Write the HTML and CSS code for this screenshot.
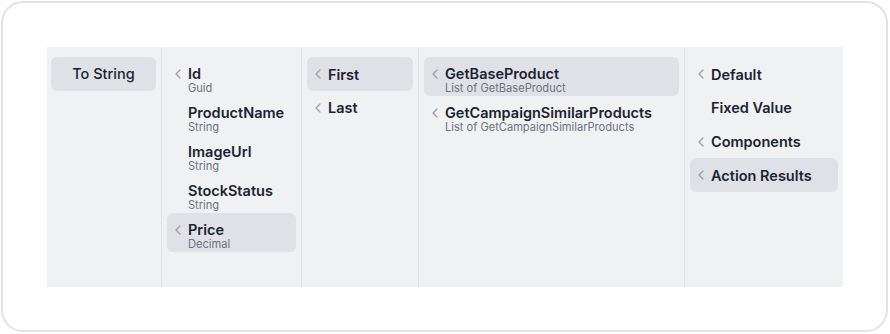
FILE: index.html
```html
<!DOCTYPE html>
<html>
<head>
<meta charset="utf-8">
<link rel="stylesheet" href="styles.css">
</head>
<body>
<div class="card">
  <div class="panel">
    <div class="col col-1">
      <div class="btn">To String</div>
    </div>
    <div class="col col-2">
      <div class="item two"><span class="chev"><svg viewBox="0 0 6 10"><polyline points="5,1 1,5 5,9"/></svg></span><div class="txt"><div class="title">Id</div><div class="sub">Guid</div></div></div>
      <div class="item two"><span class="chev"></span><div class="txt"><div class="title">ProductName</div><div class="sub">String</div></div></div>
      <div class="item two"><span class="chev"></span><div class="txt"><div class="title">ImageUrl</div><div class="sub">String</div></div></div>
      <div class="item two"><span class="chev"></span><div class="txt"><div class="title">StockStatus</div><div class="sub">String</div></div></div>
      <div class="item two active"><span class="chev"><svg viewBox="0 0 6 10"><polyline points="5,1 1,5 5,9"/></svg></span><div class="txt"><div class="title">Price</div><div class="sub">Decimal</div></div></div>
    </div>
    <div class="col col-3">
      <div class="item one active"><span class="chev"><svg viewBox="0 0 6 10"><polyline points="5,1 1,5 5,9"/></svg></span><div class="txt"><div class="title">First</div></div></div>
      <div class="item one"><span class="chev"><svg viewBox="0 0 6 10"><polyline points="5,1 1,5 5,9"/></svg></span><div class="txt"><div class="title">Last</div></div></div>
    </div>
    <div class="col col-4">
      <div class="item two active"><span class="chev"><svg viewBox="0 0 6 10"><polyline points="5,1 1,5 5,9"/></svg></span><div class="txt"><div class="title">GetBaseProduct</div><div class="sub">List of GetBaseProduct</div></div></div>
      <div class="item two"><span class="chev"><svg viewBox="0 0 6 10"><polyline points="5,1 1,5 5,9"/></svg></span><div class="txt"><div class="title">GetCampaignSimilarProducts</div><div class="sub">List of GetCampaignSimilarProducts</div></div></div>
    </div>
    <div class="col col-5">
      <div class="item one"><span class="chev"><svg viewBox="0 0 6 10"><polyline points="5,1 1,5 5,9"/></svg></span><div class="txt"><div class="title">Default</div></div></div>
      <div class="item one"><span class="chev"></span><div class="txt"><div class="title">Fixed Value</div></div></div>
      <div class="item one"><span class="chev"><svg viewBox="0 0 6 10"><polyline points="5,1 1,5 5,9"/></svg></span><div class="txt"><div class="title">Components</div></div></div>
      <div class="item one active"><span class="chev"><svg viewBox="0 0 6 10"><polyline points="5,1 1,5 5,9"/></svg></span><div class="txt"><div class="title">Action Results</div></div></div>
    </div>
  </div>
</div>
</body>
</html>
```

FILE: styles.css
```css
* { box-sizing: border-box; }
html, body { margin: 0; padding: 0; background: #ffffff; }
body {
  font-family: Inter, "Noto Sans", "Liberation Sans", sans-serif;
  color: #1b2333;
}
.card {
  margin: 1px 0 0 1px;
  width: 887px;
  height: 331px;
  border: 2px solid #e1e3e7;
  border-radius: 22px;
  background: #fff;
  padding: 44px 0 0 44px;
}
.panel {
  width: 796px;
  height: 240px;
  background: #f0f1f3;
  display: flex;
}
.col {
  padding: 10px 5px 5px 5px;
  border-right: 1px solid #e0e2e6;
  display: flex;
  flex-direction: column;
}
.col-1 { width: 115px; }
.col-2 { width: 140px; }
.col-3 { width: 117px; }
.col-4 { width: 266px; }
.col-5 { width: 158px; border-right: none; }

.btn {
  height: 33.5px;
  margin-left: -1px;
  border-radius: 6px;
  background: #dfe1e6;
  display: flex;
  align-items: center;
  justify-content: center;
  font-size: 14.5px;
  font-weight: 500;
  color: #1b2333;
}
.item {
  display: flex;
  align-items: flex-start;
  border-radius: 6px;
  padding-left: 8px;
  padding-right: 4px;
}
.item.active { background: #dfe1e6; }
.item.one { padding-top: 8.5px; padding-bottom: 7.5px; }
.item.two { padding-top: 8px; padding-bottom: 2px; }
.chev {
  width: 7px;
  height: 17.7px;
  margin-right: 6px;
  flex: none;
  display: flex;
  align-items: center;
}
.item.two .chev { height: 18px; }
.chev svg {
  width: 6px;
  height: 10px;
  fill: none;
  stroke: #9aa0ab;
  stroke-width: 1.3;
  stroke-linecap: round;
  stroke-linejoin: round;
}
.txt { min-width: 0; }
.title {
  font-size: 14.5px;
  font-weight: 600;
  line-height: 17.7px;
  white-space: nowrap;
  color: #1b2333;
}
.item.two .title { line-height: 18px; }
.sub {
  font-size: 11.1px;
  line-height: 11px;
  color: #6b7280;
  white-space: nowrap;
}
```
